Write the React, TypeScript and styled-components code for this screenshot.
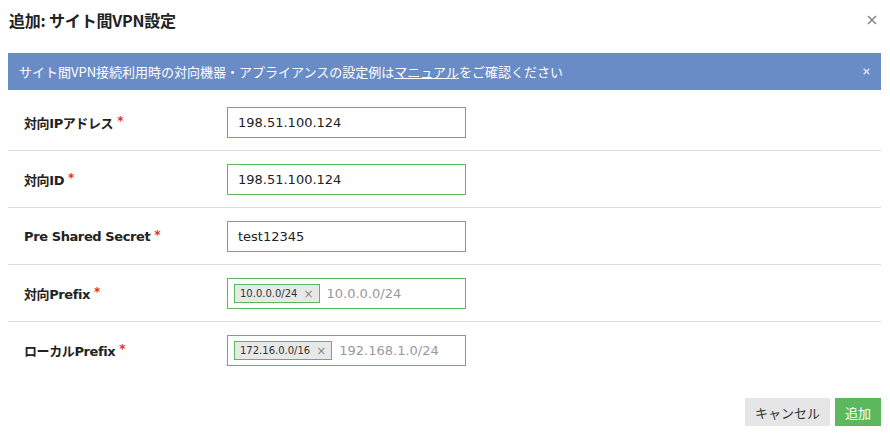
import React from "react";
import styled, { createGlobalStyle } from "styled-components";

const Global = createGlobalStyle`
  html, body { margin: 0; padding: 0; background: #fff; }
  body { font-family: "DejaVu Sans", "Noto Sans CJK JP", sans-serif; color: #222; }
  * { box-sizing: border-box; }
`;

const Dialog = styled.div`
  width: 890px;
  height: 435px;
  display: flex;
  flex-direction: column;
  background: #fff;
`;

const Header = styled.div`
  height: 40px;
  margin-bottom: 13px;
  padding: 0 11px 0 9px;
  display: flex;
  align-items: center;
  justify-content: space-between;
`;

const Title = styled.h1`
  margin: 0;
  font-family: "Noto Sans CJK JP", "DejaVu Sans", sans-serif;
  font-size: 16px;
  font-weight: 700;
  color: #222;
  letter-spacing: -0.2px;
`;

const CloseButton = styled.button`
  border: 0;
  background: none;
  padding: 0;
  width: 14px;
  height: 14px;
  display: flex;
  align-items: center;
  justify-content: center;
  cursor: pointer;
`;

const Banner = styled.div`
  margin: 0 9px 4px 8px;
  height: 37px;
  padding: 0 11px;
  background: #6a8cc6;
  color: #fff;
  display: flex;
  align-items: center;
  justify-content: space-between;
  font-family: "Noto Sans CJK JP", sans-serif;
  font-size: 13px;
`;

const BannerText = styled.span`
  a {
    color: #fff;
    text-decoration: underline;
  }
`;

const Row = styled.div<{ $last?: boolean }>`
  margin: 0 9px 0 8px;
  padding: 13px 16px 12px;
  display: grid;
  grid-template-columns: 203px 239px;
  align-items: center;
  border-bottom: ${(p) => (p.$last ? "none" : "1px solid #dcdcdc")};
`;

const Label = styled.label`
  font-family: "DejaVu Sans", "Noto Sans CJK JP", sans-serif;
  font-size: 13px;
  font-weight: 700;
  letter-spacing: -0.4px;
  color: #222;
  display: flex;
  align-items: center;
`;

const Required = styled.span`
  color: #e0302a;
  margin-left: 4px;
  font-size: 12px;
  position: relative;
  top: -2px;
`;

const Field = styled.div`
  height: 31px;
  border: 1px solid #5cb85c;
  border-color: #5cb85c;
  display: flex;
  align-items: center;
  padding: 0 10px;
  font-size: 13px;
  color: #222;
  gap: 7px;
`;

const TagField = styled(Field)`
  padding: 0 6px;
`;

const Tag = styled.span`
  height: 19px;
  padding: 0 5px;
  background: #e8e8e8;
  border: 1px solid #5cb85c;
  display: inline-flex;
  align-items: center;
  gap: 6px;
  font-size: 10px;
  color: #333;
`;

const TagX = styled.span`
  color: #888;
  font-size: 12px;
  line-height: 1;
`;

const Placeholder = styled.span`
  color: #999;
  font-size: 13px;
`;

const Footer = styled.div`
  margin-top: 20px;
  padding-right: 9px;
  display: flex;
  justify-content: flex-end;
  gap: 5px;
`;

const Button = styled.button<{ $primary?: boolean }>`
  height: 28px;
  padding: 0 10px;
  border: 0;
  font-family: "Noto Sans CJK JP", sans-serif;
  font-size: 13px;
  background: ${(p) => (p.$primary ? "#5cb85c" : "#e6e6e6")};
  color: ${(p) => (p.$primary ? "#fff" : "#333")};
  cursor: pointer;
`;

const XIcon = ({ size, color, width }: { size: number; color: string; width: number }) => (
  <svg width={size} height={size} viewBox="0 0 10 10">
    <path d="M1 1L9 9M9 1L1 9" stroke={color} strokeWidth={width} />
  </svg>
);

const fields = [
  { label: "対向IPアドレス", value: "198.51.100.124" },
  { label: "対向ID", value: "198.51.100.124" },
  { label: "Pre Shared Secret", value: "test12345" },
];

const tagFields = [
  { label: "対向Prefix", tag: "10.0.0.0/24", placeholder: "10.0.0.0/24" },
  { label: "ローカルPrefix", tag: "172.16.0.0/16", placeholder: "192.168.1.0/24" },
];

export default function App() {
  return (
    <>
      <Global />
      <Dialog>
        <Header>
          <Title>追加: サイト間VPN設定</Title>
          <CloseButton aria-label="close">
            <XIcon size={10} color="#888" width={1.6} />
          </CloseButton>
        </Header>
        <Banner>
          <BannerText>
            サイト間VPN接続利用時の対向機器・アプライアンスの設定例は<a href="#">マニュアル</a>をご確認ください
          </BannerText>
          <XIcon size={7} color="#dfe6f3" width={2} />
        </Banner>
        {fields.map((f) => (
          <Row key={f.label}>
            <Label>
              {f.label}
              <Required>*</Required>
            </Label>
            <Field>{f.value}</Field>
          </Row>
        ))}
        {tagFields.map((f, i) => (
          <Row key={f.label} $last={i === tagFields.length - 1}>
            <Label>
              {f.label}
              <Required>*</Required>
            </Label>
            <TagField>
              <Tag>
                {f.tag}
                <TagX>×</TagX>
              </Tag>
              <Placeholder>{f.placeholder}</Placeholder>
            </TagField>
          </Row>
        ))}
        <Footer>
          <Button>キャンセル</Button>
          <Button $primary>追加</Button>
        </Footer>
      </Dialog>
    </>
  );
}
